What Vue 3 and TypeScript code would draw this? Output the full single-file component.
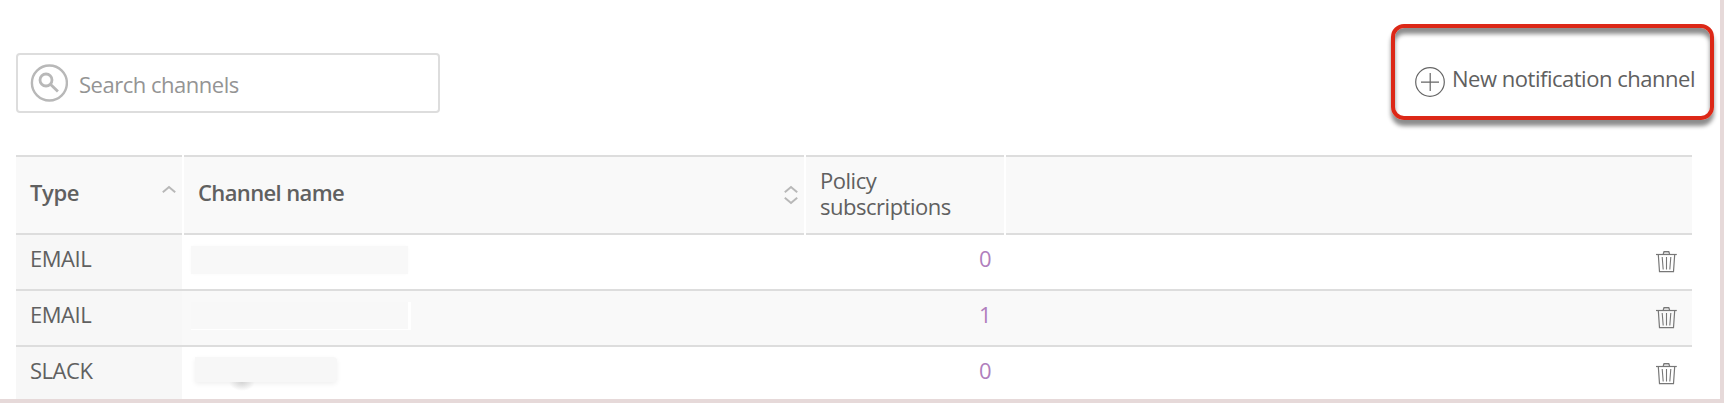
<script setup lang="ts">
interface Channel {
  id: number
  type: string
  subscriptions: number
  mask: string
}

const channels: Channel[] = [
  { id: 1, type: 'EMAIL', subscriptions: 0, mask: 'mask-first' },
  { id: 2, type: 'EMAIL', subscriptions: 1, mask: 'mask-second' },
  { id: 3, type: 'SLACK', subscriptions: 0, mask: 'mask-third' },
]
</script>

<template>
  <main class="page">
    <header class="toolbar">
      <label class="search">
        <svg class="search-icon" width="38" height="38" viewBox="0 0 38 38">
          <circle cx="19.400" cy="19" r="17.500" />
          <circle cx="16" cy="16" r="6" />
          <path d="M20.400 20.200l7.500 7.300" />
        </svg>
        <input class="search-input" type="text" placeholder="Search channels" />
      </label>
      <button class="new-channel" type="button">
        <svg class="plus-icon" width="30" height="30" viewBox="0 0 30 30">
          <circle cx="15" cy="15" r="14.300" />
          <path d="M6 15.200H24M15.200 6V24" />
        </svg>
        <span>New notification channel</span>
      </button>
    </header>

    <section class="table">
      <div class="row head">
        <div class="cell strong">
          <span class="type-label">Type</span>
          <svg class="sort" width="14" height="20" viewBox="0 0 14 20">
            <path d="M.8 7.200L7 2l6.200 5.200" />
          </svg>
        </div>
        <div class="cell strong">
          <span>Channel name</span>
          <svg class="sort" width="14" height="20" viewBox="0 0 14 20">
            <path d="M.8 7.200L7 2l6.200 5.200M.8 12.800L7 18l6.200-5.200" />
          </svg>
        </div>
        <div class="cell policy">Policy<br />subscriptions</div>
        <div class="cell"></div>
      </div>
      <div v-for="channel in channels" :key="channel.id" class="row body">
        <div class="cell type">{{ channel.type }}</div>
        <div class="cell name"><span class="mask" :class="channel.mask"></span></div>
        <div class="cell count">{{ channel.subscriptions }}</div>
        <div class="cell actions">
          <svg class="trash" width="22" height="23" viewBox="0 0 22 23">
            <path d="M0 4.500H20.800" />
            <path class="handle" d="M7.200 4L8 1.700H12.800L13.600 4" />
            <path d="M2.300 4.500L3.500 21.700H17.500L18.700 4.500" />
            <path class="thin" d="M6.200 7L7.200 19.500M10.500 7V19.500M14.800 7L13.800 19.500" />
          </svg>
        </div>
      </div>
    </section>
  </main>
</template>

<style>
body {
  margin: 0;
}
</style>

<style scoped>
.page {
  box-sizing: border-box;
  width: 1724px;
  height: 403px;
  padding: 24px 6px 0 16px;
  overflow: hidden;
  border: solid #e6d9d9;
  border-width: 0 4px 4px 0;
  background: #fff;
  color: #606060;
  font: 22px/26px "Open Sans", "Noto Sans", sans-serif;
  letter-spacing: -0.480px;
}

.toolbar {
  display: flex;
  align-items: flex-start;
  justify-content: space-between;
  height: 131px;
}

.search {
  box-sizing: border-box;
  display: flex;
  align-items: center;
  width: 424px;
  height: 60px;
  margin-top: 29px;
  padding-left: 12px;
  border: 2px solid #ddd;
  border-radius: 4px;
}

.search-icon {
  flex: none;
  fill: none;
  stroke: #b8b8b8;
  stroke-width: 2.400;
}

.search-icon circle + circle,
.search-icon path {
  stroke-width: 2.800;
}

.search-input {
  flex: 1;
  min-width: 0;
  height: 30px;
  margin: 1px 0 0 11px;
  padding: 0;
  border: 0;
  outline: 0;
  background: transparent;
  color: #666;
  font: inherit;
  letter-spacing: inherit;
}

.search-input::placeholder {
  color: #949494;
  opacity: 1;
}

.new-channel {
  box-sizing: border-box;
  display: flex;
  align-items: flex-start;
  width: 323px;
  height: 96px;
  padding: 39px 0 0 20px;
  border: 4px solid #dc2817;
  border-radius: 13px;
  background: transparent;
  box-shadow: 0 6px 4px rgba(0, 0, 0, 0.45), inset 0 6px 4px rgba(0, 0, 0, 0.45);
  color: #606060;
  font: inherit;
  letter-spacing: inherit;
  white-space: nowrap;
}

.plus-icon {
  flex: none;
  fill: none;
  stroke: #666;
  stroke-width: 1.200;
}

.new-channel span {
  margin: -2px 0 0 7px;
}

.table {
  width: 1676px;
}

.row {
  display: grid;
  grid-template-columns: 166px 620px 198px 1fr;
  column-gap: 2px;
}

.cell {
  box-sizing: border-box;
  display: flex;
  padding: 0 14px;
}

.head .cell {
  align-items: center;
  justify-content: space-between;
  height: 80px;
  padding-right: 6.500px;
  border: solid #ddd;
  border-width: 2px 0;
  background: #f9f9f9;
}

.strong {
  font-weight: 600;
  letter-spacing: -0.620px;
}

.head .strong span {
  margin-top: -7px;
}

.head .strong .type-label {
  letter-spacing: -0.400px;
}

.head .policy {
  justify-content: flex-start;
  padding-bottom: 4px;
}

.sort {
  fill: none;
  stroke: #b8b8b8;
  stroke-width: 2;
}

.body {
  box-sizing: border-box;
  height: 56px;
  border-bottom: 2px solid #ddd;
}

.body:nth-child(odd) {
  background: #f9f9f9;
}

.body .cell {
  height: 54px;
  padding-top: 10px;
}

.body .type {
  background: #f7f7f7;
}

.body .name {
  padding: 11px 0 0 7px;
}

.mask {
  height: 28px;
  background: #f8f8f8;
}

.mask-first {
  width: 217px;
  box-shadow: 0 0 3px #fafafa;
}

.mask-second {
  box-sizing: border-box;
  width: 220px;
  border: solid #fff;
  border-width: 0 3px 1px 0;
}

.mask-third {
  width: 142px;
  height: 25px;
  margin: -1px 0 0 4px;
  border-radius: 0 4px 4px 0;
  background: #f7f7f7;
  box-shadow: 0 2px 5px #f0f0f0;
}

.mask-third::after {
  display: block;
  width: 26px;
  height: 9px;
  margin: 25px 0 0 34px;
  background: radial-gradient(ellipse at 50% 0, #d4d4d4, transparent 70%);
  content: "";
}

.body .count {
  justify-content: flex-end;
  padding-right: 13px;
  color: #b07fbd;
}

.body .actions {
  justify-content: flex-end;
  padding: 15px 14px 0 0;
}

.trash {
  fill: none;
  stroke: #777;
  stroke-width: 1.200;
}

.trash .handle {
  fill: #ddd;
}

.trash .thin {
  stroke-width: 1.100;
}
</style>
